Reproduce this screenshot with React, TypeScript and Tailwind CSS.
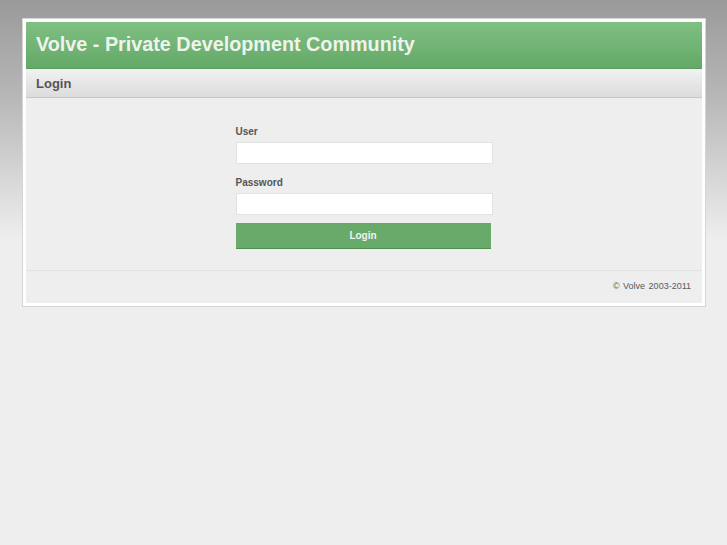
export default function App() {
  return (
    <div
      className="min-h-[545px] w-full bg-[linear-gradient(to_bottom,#9a9a9a_0px,#b5b5b5_90px,#eeeeee_240px,#eeeeee_100%)] pt-[18px] font-['Liberation_Sans',Arial,sans-serif]"
    >
      <div className="ml-[22px] w-[684px] border border-[#d4d4d4] bg-white p-[3px]">
        {/* Header */}
        <div className="flex h-[47px] items-center border-b border-[#5b9d5e] bg-[linear-gradient(to_bottom,#7fc083,#64a967)] px-[10px]">
          <h1 className="text-[19.8px] font-bold text-[#eef3ee]">Volve - Private Development Community</h1>
        </div>

        {/* Subheader */}
        <div className="flex h-[29px] items-center border-b border-[#c6c6c6] bg-[linear-gradient(to_bottom,#f1f1f1,#dcdcdc)] px-[10px]">
          <h2 className="pt-[1px] text-[13px] font-bold text-[#555]">Login</h2>
        </div>

        {/* Body */}
        <div className="flex h-[172px] justify-center bg-[#eeeeee] pt-[28px]">
          <form className="w-[257px]" onSubmit={(e) => e.preventDefault()}>
            <label className="block text-[10px] font-bold leading-[12px] text-[#555]">User</label>
            <input
              type="text"
              className="mt-[4px] block h-[22px] w-[257px] border border-[#e2e2e2] bg-white outline-none"
            />
            <label className="mt-[13px] block text-[10px] font-bold leading-[12px] text-[#555]">Password</label>
            <input
              type="password"
              className="mt-[4px] block h-[22px] w-[257px] border border-[#e2e2e2] bg-white outline-none"
            />
            <button
              type="submit"
              className="mt-[8px] block h-[26px] w-[255px] border-b border-[#4f8f52] bg-[#67aa69] text-[10px] font-bold text-[#f2f2f2]"
            >
              Login
            </button>
          </form>
        </div>

        {/* Footer */}
        <div className="flex h-[33px] items-center justify-end border-t border-[#e2e2e2] bg-[#eeeeee] pr-[11px]">
          <span className="text-[9px] text-[#5a5a5a] [word-spacing:1px]">© Volve 2003-2011</span>
        </div>
      </div>
    </div>
  );
}
